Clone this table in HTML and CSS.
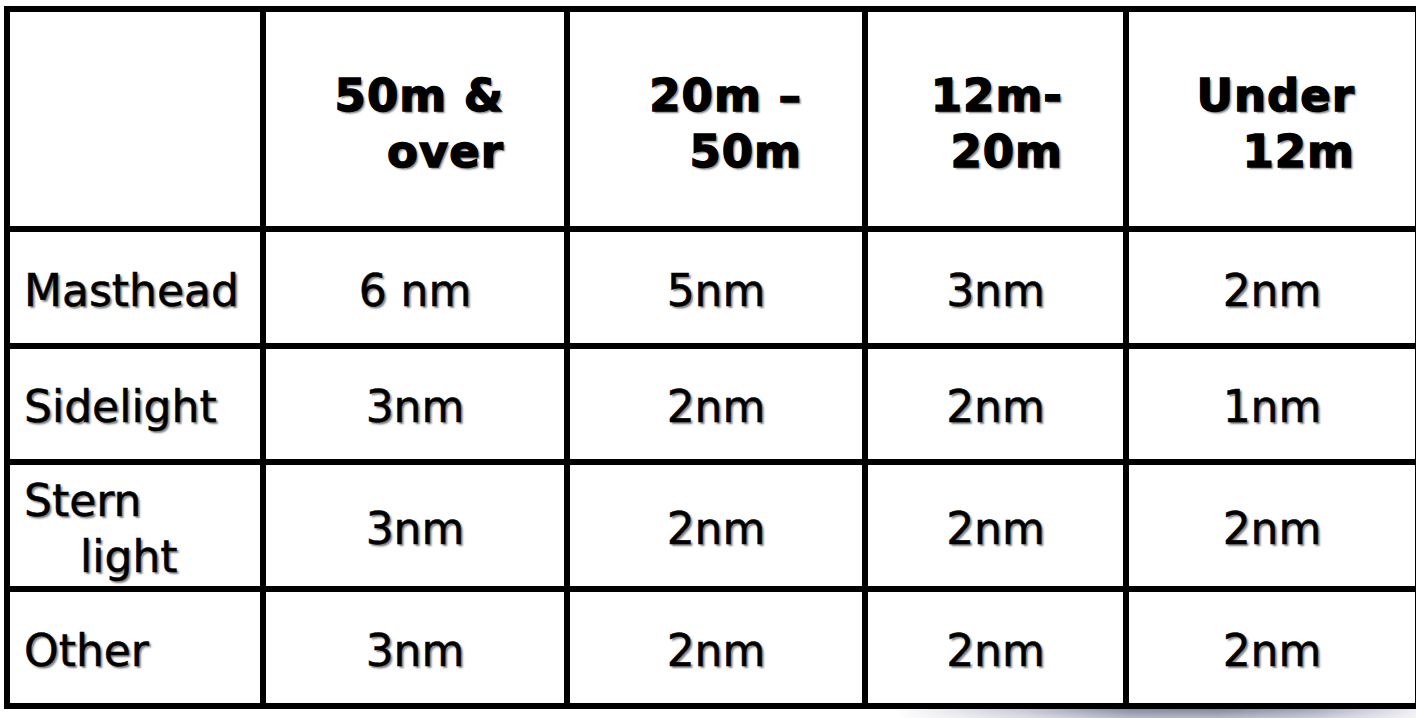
FILE: index.html
```html
<!DOCTYPE html>
<html lang="en">
<head>
<meta charset="utf-8">
<title>Navigation light visibility ranges</title>
<link rel="stylesheet" href="styles.css">
</head>
<body>
<main class="page">
  <div class="grid">
    <div class="cell corner"></div>
    <div class="cell head">50m &amp;<br>over</div>
    <div class="cell head">20m –<br>50m</div>
    <div class="cell head">12m-<br>20m</div>
    <div class="cell head">Under<br>12m</div>

    <div class="cell label">Masthead</div>
    <div class="cell data">6 nm</div>
    <div class="cell data">5nm</div>
    <div class="cell data">3nm</div>
    <div class="cell data">2nm</div>

    <div class="cell label">Sidelight</div>
    <div class="cell data">3nm</div>
    <div class="cell data">2nm</div>
    <div class="cell data">2nm</div>
    <div class="cell data">1nm</div>

    <div class="cell label"><span>Stern</span><span class="indent">light</span></div>
    <div class="cell data">3nm</div>
    <div class="cell data">2nm</div>
    <div class="cell data">2nm</div>
    <div class="cell data">2nm</div>

    <div class="cell label">Other</div>
    <div class="cell data">3nm</div>
    <div class="cell data">2nm</div>
    <div class="cell data">2nm</div>
    <div class="cell data">2nm</div>
  </div>
  <div class="footer"><div class="shade"></div></div>
</main>
</body>
</html>
```

FILE: styles.css
```css
html, body {
  margin: 0;
  padding: 0;
  background: #ffffff;
  overflow: hidden;
}

.page {
  padding: 6px 0 0 4px;
  width: 1417px;
  font-family: "DejaVu Sans", Verdana, sans-serif;
  color: #000;
}

.grid {
  display: grid;
  grid-template-columns: 250px 298px 292px 255px 286px;
  grid-template-rows: 214px 111px 110px 121px 111px;
  gap: 6px;
  padding: 6px;
  background: #000;
}

.cell {
  background: #fff;
  font-size: 44px;
  line-height: 56px;
  -webkit-text-stroke: 0.5px #000;
  text-shadow: 2px 2px 2px rgba(0, 0, 0, 0.5);
  display: flex;
  align-items: center;
  padding-top: 6px;
  box-sizing: border-box;
}

.head {
  font-weight: bold;
  font-size: 45px;
  letter-spacing: 1px;
  -webkit-text-stroke: 1.4px #000;
  justify-content: flex-end;
  text-align: right;
  padding-right: 60px;
  padding-top: 10px;
}

.label {
  padding-left: 14px;
  flex-direction: column;
  align-items: flex-start;
  justify-content: center;
}

.indent {
  padding-left: 56px;
}

.data {
  justify-content: center;
}

.footer {
  display: flex;
  justify-content: flex-end;
  height: 9px;
  margin-left: -4px;
  width: 1416px;
}

.shade {
  width: 520px;
  height: 9px;
  background:
    linear-gradient(to bottom, rgba(255,255,255,0) 0%, rgba(255,255,255,0.4) 100%),
    linear-gradient(to right, #ffffff 0%, #c4c6d4 25%, #868aa5 45%, #83879f 62%, #a3a7bd 80%, #eeeef4 100%);
}
```
